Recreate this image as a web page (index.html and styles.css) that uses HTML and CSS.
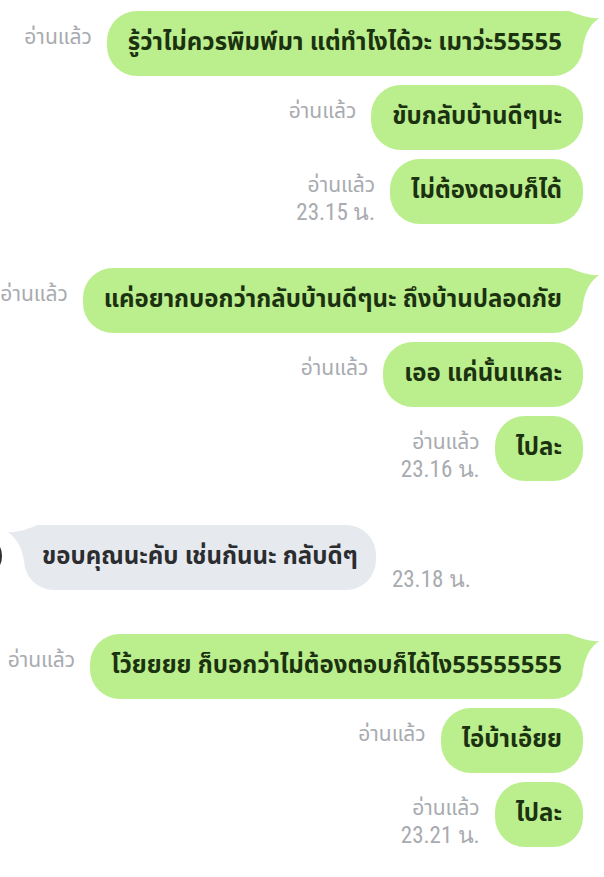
FILE: index.html
```html
<!DOCTYPE html>
<html lang="th">
<head>
    <meta charset="UTF-8">
    <meta name="viewport" content="width=device-width, initial-scale=1.0">
    <title>แชท</title>
    <link rel="stylesheet" href="styles.css">
</head>
<body>
    <div class="chat">
        <div class="group">
            <div class="row">
                <div class="meta"><div>อ่านแล้ว</div></div>
                <div class="bubble first">รู้ว่าไม่ควรพิมพ์มา แต่ทำไงได้วะ เมาว่ะ55555<svg class="tail" viewBox="0 0 47 36"><path d="M0 0 H16 C27 4 37 8 46 7 C38 13 32 22 30 36 H0 Z"/></svg></div>
            </div>
            <div class="row">
                <div class="meta"><div>อ่านแล้ว</div></div>
                <div class="bubble">ขับกลับบ้านดีๆนะ</div>
            </div>
            <div class="row">
                <div class="meta"><div>อ่านแล้ว</div><div class="time">23.15 น.</div></div>
                <div class="bubble">ไม่ต้องตอบก็ได้</div>
            </div>
        </div>

        <div class="group">
            <div class="row">
                <div class="meta"><div>อ่านแล้ว</div></div>
                <div class="bubble first">แค่อยากบอกว่ากลับบ้านดีๆนะ ถึงบ้านปลอดภัย<svg class="tail" viewBox="0 0 47 36"><path d="M0 0 H16 C27 4 37 8 46 7 C38 13 32 22 30 36 H0 Z"/></svg></div>
            </div>
            <div class="row">
                <div class="meta"><div>อ่านแล้ว</div></div>
                <div class="bubble">เออ แค่นั้นแหละ</div>
            </div>
            <div class="row">
                <div class="meta"><div>อ่านแล้ว</div><div class="time">23.16 น.</div></div>
                <div class="bubble">ไปละ</div>
            </div>
        </div>

        <div class="group incoming-group">
            <div class="row incoming">
                <div class="avatar"></div>
                <div class="bubble gray first">ขอบคุณนะคับ เช่นกันนะ กลับดีๆ<svg class="tail" viewBox="0 0 47 36"><path d="M0 0 H16 C27 4 37 8 46 7 C38 13 32 22 30 36 H0 Z"/></svg></div>
                <div class="time">23.18 น.</div>
            </div>
        </div>

        <div class="group">
            <div class="row">
                <div class="meta"><div>อ่านแล้ว</div></div>
                <div class="bubble first">โว้ยยยย ก็บอกว่าไม่ต้องตอบก็ได้ไง55555555<svg class="tail" viewBox="0 0 47 36"><path d="M0 0 H16 C27 4 37 8 46 7 C38 13 32 22 30 36 H0 Z"/></svg></div>
            </div>
            <div class="row">
                <div class="meta"><div>อ่านแล้ว</div></div>
                <div class="bubble">ไอ่บ้าเอ้ยย</div>
            </div>
            <div class="row">
                <div class="meta"><div>อ่านแล้ว</div><div class="time">23.21 น.</div></div>
                <div class="bubble">ไปละ</div>
            </div>
        </div>
    </div>
</body>
</html>
```

FILE: styles.css
```css
body {
    margin: 0;
    background-color: #fff;
    font-family: Tahoma, "Noto Sans Thai", "Noto Sans", "DejaVu Sans", sans-serif;
    overflow: hidden;
}
.chat {
    padding: 11px 21px 0 0;
}
.group {
    display: flex;
    flex-direction: column;
    gap: 9px;
    margin-bottom: 42px;
}
.incoming-group {
    margin-bottom: 44px;
}
.group + .incoming-group {
    margin-top: 6px;
}
.row {
    display: flex;
    justify-content: flex-end;
    align-items: flex-start;
    gap: 15px;
}
.row.incoming {
    justify-content: flex-start;
    align-items: flex-end;
    gap: 0;
}
.meta {
    flex-shrink: 0;
    padding-top: 13px;
    text-align: right;
    white-space: nowrap;
    color: #a8abb0;
    font-size: 21px;
    line-height: 27px;
}
.time {
    font-family: "Liberation Sans Narrow", "Roboto Condensed", "Liberation Sans", sans-serif;
    font-size: 23px;
    line-height: 27px;
    white-space: nowrap;
    color: #a8abb0;
}
.bubble {
    position: relative;
    z-index: 0;
    flex-shrink: 0;
    height: 65px;
    line-height: 65px;
    padding: 0 21px;
    border-radius: 30px;
    background-color: #bbee8d;
    color: #1b3210;
    font-size: 24px;
    font-weight: bold;
    white-space: nowrap;
}
.tail {
    position: absolute;
    z-index: -1;
    top: 0;
    right: -17px;
    width: 47px;
    height: 36px;
    fill: #bbee8d;
}
.bubble.gray {
    background-color: #e6e9ed;
    color: #2b2d30;
    padding: 0 18px;
    margin-left: 22px;
}
.bubble.gray .tail {
    right: auto;
    left: -17px;
    transform: scaleX(-1);
    fill: #e6e9ed;
}
.incoming .time {
    margin-left: 16px;
    margin-bottom: -3px;
}
.avatar {
    flex-shrink: 0;
    width: 44px;
    height: 44px;
    margin-left: -42px;
    margin-bottom: 12px;
    border-radius: 50%;
    background-color: #8a8a8a;
    border: 2px solid #2f2f2f;
    box-sizing: border-box;
}
```
